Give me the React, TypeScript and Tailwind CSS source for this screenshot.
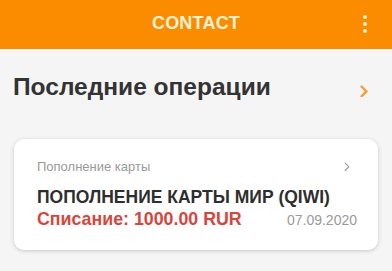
import React from 'react';

function Dots() {
  return (
    <svg width="6" height="20" viewBox="0 0 6 20" fill="#fff3d9">
      <circle cx="3" cy="3" r="2" />
      <circle cx="3" cy="10" r="2" />
      <circle cx="3" cy="17" r="2" />
    </svg>
  );
}

function Chevron({ color, size = 8, width = 2 }: { color: string; size?: number; width?: number }) {
  return (
    <svg width={size} height={size * 1.6} viewBox="0 0 8 13" fill="none" stroke={color} strokeWidth={width} strokeLinecap="round" strokeLinejoin="round">
      <path d="M1.5 1.5L6.5 6.5L1.5 11.5" />
    </svg>
  );
}

export default function App() {
  return (
    <div className="w-[392px] h-[271px] bg-[#f5f5f5] overflow-hidden font-['Liberation_Sans',Arial,sans-serif]">
      {/* top bar */}
      <header className="h-[49px] bg-[#fb8c00] grid grid-cols-[1fr_auto_1fr] items-center">
        <div />
        <h1 className="text-[18px] font-bold text-[#fff3d9] tracking-[0.2px] pb-[3px]">CONTACT</h1>
        <div className="flex justify-end pr-[24px] pb-[2px]">
          <Dots />
        </div>
      </header>

      {/* recent operations */}
      <div className="flex items-center justify-between pl-[13px] pr-[24px] pt-[24px]">
        <h2 className="text-[24.5px] leading-[28px] font-bold text-[#333333]">Последние операции</h2>
        <div className="pt-[8px]">
          <Chevron color="#f5a030" size={8} width={2.4} />
        </div>
      </div>

      {/* last operation card */}
      <div className="mx-[14px] mt-[38px] h-[111px] bg-white rounded-[10px] shadow-[0_1px_4px_rgba(0,0,0,0.18)] pl-[23px] pr-[21px] pt-[20px]">
        <div className="flex items-center justify-between pr-[7px]">
          <span className="text-[13px] leading-[16px] text-[#9a9a9a]">Пополнение карты</span>
          <Chevron color="#9a9a9a" size={6} width={1.6} />
        </div>
        <div className="mt-[12px] text-[17.5px] leading-[20px] font-bold text-[#2e2e2e]">
          ПОПОЛНЕНИЕ КАРТЫ МИР (QIWI)
        </div>
        <div className="mt-[2px] flex items-baseline justify-between">
          <span className="text-[17.8px] leading-[20px] font-bold text-[#d8453c]">Списание: 1000.00 RUR</span>
          <span className="text-[14px] text-[#9a9a9a]">07.09.2020</span>
        </div>
      </div>
    </div>
  );
}
